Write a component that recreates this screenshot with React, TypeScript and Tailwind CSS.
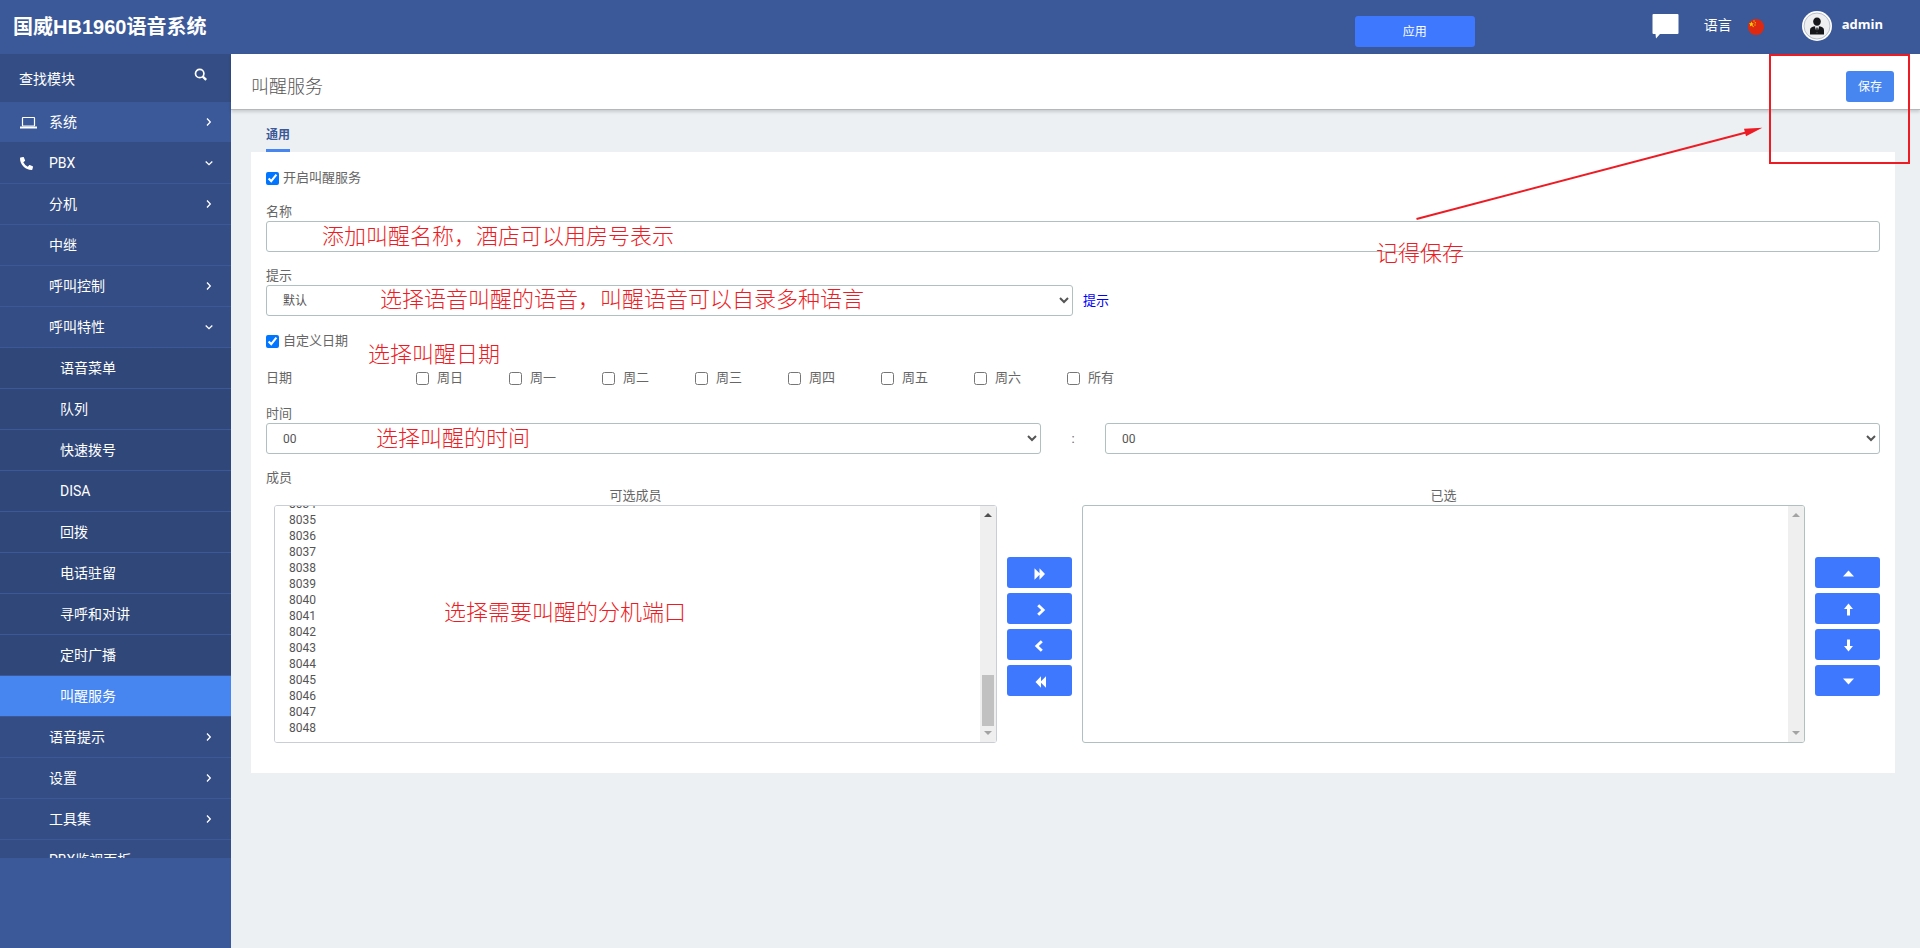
import { useEffect, useRef } from 'react';
import type { ReactNode } from 'react';
import { FaPhoneAlt } from 'react-icons/fa';

type MenuItem = {
  label: string;
  level: 1 | 2 | 3;
  icon?: ReactNode;
  arrow?: 'right' | 'down';
  state?: 'hover' | 'active';
};

const LaptopIcon = () => (
  <svg width="17" height="13" viewBox="0 0 17 13" fill="none" aria-hidden="true">
    <rect x="2.5" y="1.5" width="12" height="8.5" rx="0.5" stroke="white" strokeWidth="1.2" />
    <rect x="0" y="10.5" width="17" height="2" fill="white" />
  </svg>
);

const menu: MenuItem[] = [
  { label: '系统', level: 1, icon: <LaptopIcon />, arrow: 'right', state: 'hover' },
  { label: 'PBX', level: 1, icon: <FaPhoneAlt size={13} />, arrow: 'down' },
  { label: '分机', level: 2, arrow: 'right' },
  { label: '中继', level: 2 },
  { label: '呼叫控制', level: 2, arrow: 'right' },
  { label: '呼叫特性', level: 2, arrow: 'down' },
  { label: '语音菜单', level: 3 },
  { label: '队列', level: 3 },
  { label: '快速拨号', level: 3 },
  { label: 'DISA', level: 3 },
  { label: '回拨', level: 3 },
  { label: '电话驻留', level: 3 },
  { label: '寻呼和对讲', level: 3 },
  { label: '定时广播', level: 3 },
  { label: '叫醒服务', level: 3, state: 'active' },
  { label: '语音提示', level: 2, arrow: 'right' },
  { label: '设置', level: 2, arrow: 'right' },
  { label: '工具集', level: 2, arrow: 'right' },
  { label: 'PBX监视面板', level: 2 },
];

const days = ['周日', '周一', '周二', '周三', '周四', '周五', '周六', '所有'];
const extensions = Array.from({ length: 58 }, (_, i) => String(7991 + i));
const twoDigits = (count: number) => Array.from({ length: count }, (_, i) => String(i).padStart(2, '0'));

const rowColor = (item: MenuItem) => {
  if (item.state === 'active') return 'bg-[#4786f1] border-[#3b5998]';
  if (item.state === 'hover') return 'bg-[#3b5998] border-[#344d84]';
  return item.level === 3 ? 'bg-[#30477a] border-[#3b5998]' : 'bg-[#344d84] border-[#3b5998]';
};

const Arrow = ({ direction }: { direction: 'right' | 'down' }) => (
  <svg width="8" height="10" viewBox="0 0 8 10" fill="none" stroke="white" strokeWidth="1.300" aria-hidden="true">
    <path d={direction === 'right' ? 'M2 1.500L5.300 5 2 8.500' : 'M0.700 3.500L4 6.700l3.300-3.200'} />
  </svg>
);

const Header = () => (
  <header className="flex h-[54px] shrink-0 items-start bg-[#3b5998] text-white">
    <h1 className="flex-1 pt-3 pl-[13px] text-xl leading-[30px] font-bold">国威HB1960语音系统</h1>
    <button type="button" className="mt-4 mr-[177px] h-[31px] w-[120px] rounded-[3px] bg-[#3d78ff] text-xs">
      应用
    </button>
    <button type="button" aria-label="消息" className="mt-[13px] mr-[25px]">
      <svg width="27" height="26" viewBox="0 0 27 26" fill="white">
        <path d="M1.500 1h24a1 1 0 0 1 1 1v18a1 1 0 0 1-1 1H8l-4 4.500L3.500 21h-2a1 1 0 0 1-1-1V2a1 1 0 0 1 1-1z" />
      </svg>
    </button>
    <button type="button" className="mt-[15px] mr-[38px] flex items-center gap-4 text-sm leading-5">
      语言
      <svg width="16" height="16" viewBox="0 0 16 16" className="mt-1">
        <circle cx="8" cy="8" r="8" fill="#de2910" />
        <path d="M3.400 2.600l.7 1.700 1.800.1-1.400 1.200.5 1.800-1.600-1-1.600 1 .5-1.800L.9 4.400l1.800-.1z" fill="#ffd400" />
        <circle cx="6" cy="2" r=".7" fill="#f5b800" />
        <circle cx="7.300" cy="3.800" r=".7" fill="#f5b800" />
        <circle cx="7" cy="6" r=".7" fill="#f5b800" />
        <circle cx="5.200" cy="7.600" r=".7" fill="#f5b800" />
      </svg>
    </button>
    <button type="button" className="mt-[11px] mr-[37px] flex items-start gap-[10px]">
      <svg width="30" height="30" viewBox="0 0 30 30">
        <circle cx="15" cy="15" r="15" fill="white" />
        <circle cx="15" cy="15" r="13" fill="#eeeff1" stroke="#b9bfca" strokeWidth="1" />
        <path d="M15 6.500c2.400 0 3.800 1.700 3.800 4s-1.500 4.300-3.800 4.300-3.800-2-3.800-4.300 1.400-4 3.800-4z" fill="#15171b" />
        <path d="M8 23.500v-4.500c0-2.200 2-3.300 4.600-3.800L15 17l2.400-1.800c2.600.5 4.600 1.600 4.600 3.800v4.500z" fill="#15171b" />
        <path d="M12.800 15.300L15 16.800l2.200-1.500L15 22.500z" fill="#eeeff1" />
        <path d="M14.400 16.800h1.200l.5 4-1.100 1.500-1.100-1.500z" fill="#15171b" />
      </svg>
      <span className="pt-1 font-['Open_Sans',sans-serif] text-[13px] leading-[18px] font-bold">admin</span>
    </button>
  </header>
);

const Sidebar = () => (
  <aside className="flex w-[231px] shrink-0 flex-col bg-[#3b5998] pb-[90px] text-sm text-white">
    <div className="flex h-12 shrink-0 items-start bg-[#344d84] pl-[19px]">
      <input
        type="text"
        aria-label="查找模块"
        placeholder="查找模块"
        className="mt-[15px] h-5 w-[175px] bg-transparent leading-5 text-white outline-none placeholder:text-white"
      />
      <button type="button" aria-label="搜索" className="mt-[14px]">
        <svg width="14" height="14" viewBox="0 0 14 14" fill="none" stroke="white">
          <circle cx="5.700" cy="5.500" r="4.200" strokeWidth="1.700" />
          <path d="M8.800 8.600l3.400 3.200" strokeWidth="2.400" />
        </svg>
      </button>
    </div>
    <nav className="min-h-0 flex-1 overflow-hidden">
      {menu.map((item) => (
        <a
          key={item.label}
          href="#"
          className={`flex h-[41px] items-center border-b pr-[18px] ${item.level === 3 ? 'pl-[60px]' : 'pl-5'} ${rowColor(item)}`}
        >
          {item.level !== 3 && <span className="w-[29px]">{item.icon}</span>}
          <span className="flex-1">{item.label}</span>
          {item.arrow && <Arrow direction={item.arrow} />}
        </a>
      ))}
    </nav>
  </aside>
);

const Note = ({ className, children }: { className: string; children: ReactNode }) => (
  <span
    className={`pointer-events-none absolute text-[22px] leading-[30px] font-light whitespace-nowrap text-[#ed1c24] ${className}`}
  >
    {children}
  </span>
);

const IconButton = ({ label, children }: { label: string; children: ReactNode }) => (
  <button
    type="button"
    aria-label={label}
    className="flex h-[31px] w-[65px] items-center justify-center rounded-[3px] bg-[#3d78ff] pt-[3px]"
  >
    <svg width="14" height="14" viewBox="0 0 14 14" fill="white">
      {children}
    </svg>
  </button>
);

// track drawn over the right edge of a list box
const ScrollTrack = ({ scrolled = false }: { scrolled?: boolean }) => (
  <div
    aria-hidden="true"
    className="pointer-events-none absolute inset-y-px right-px flex w-4 flex-col items-center justify-between rounded-r-[2px] bg-[#efefef] py-[7px]"
  >
    <svg width="8" height="4" viewBox="0 0 8 4" fill={scrolled ? '#505050' : '#a3a3a3'}>
      <path d="M0 4l4-4 4 4z" />
    </svg>
    {scrolled && <div className="mt-auto mb-[5px] h-[51px] w-3 bg-[#c1c1c1]" />}
    <svg width="8" height="4" viewBox="0 0 8 4" fill="#a3a3a3">
      <path d="M0 0h8L4 4z" />
    </svg>
  </div>
);

const selectClass =
  'h-[31px] rounded-[3px] border border-[#b0bfbf] bg-white pl-3 text-xs text-[#555] outline-none';
const listClass =
  'block h-[238px] w-full overflow-y-scroll rounded-[3px] border bg-white py-[5px] pl-3 text-xs text-[#555] outline-none';

const Members = () => {
  const available = useRef<HTMLSelectElement>(null);

  useEffect(() => {
    if (available.current) available.current.scrollTop = available.current.scrollHeight;
  }, []);

  return (
    <div className="flex gap-[10px] pl-2">
      <div className="relative flex-1">
        <label htmlFor="available" className="block text-center leading-[18px]">
          可选成员
        </label>
        <div className="relative">
          <select id="available" multiple ref={available} className={`${listClass} border-[#c8ced8]`}>
            {extensions.map((ext) => (
              <option key={ext} className="h-4 p-0 pl-[2px] leading-4">
                {ext}
              </option>
            ))}
          </select>
          <ScrollTrack scrolled />
        </div>
        <Note className="top-[111px] left-[170px]">选择需要叫醒的分机端口</Note>
      </div>
      <div className="flex flex-col gap-[5px] pt-[70px]">
        <IconButton label="全部添加">
          <path d="M1.500 1.200l5 5V1.200L12 7l-5.500 5.800v-5l-5 5z" />
        </IconButton>
        <IconButton label="添加">
          <path d="M6.200 1.200l-2 2L8.200 7l-4 3.800 2 2L12.200 7z" />
        </IconButton>
        <IconButton label="移除">
          <path d="M7.800 1.200l2 2L5.800 7l4 3.800-2 2L1.800 7z" />
        </IconButton>
        <IconButton label="全部移除">
          <path d="M13 1.200l-5 5V1.200L2.500 7 8 12.800v-5l5 5z" />
        </IconButton>
      </div>
      <div className="flex-1">
        <label htmlFor="selected" className="block text-center leading-[18px]">
          已选
        </label>
        <div className="relative">
          <select id="selected" multiple className={`${listClass} border-[#b0bfbf]`} />
          <ScrollTrack />
        </div>
      </div>
      <div className="flex flex-col gap-[5px] pt-[70px]">
        <IconButton label="置顶">
          <path d="M2 9.500L7.500 3.500 13 9.500z" />
        </IconButton>
        <IconButton label="上移">
          <path d="M7.500 0.500L12 6H9v6.500H6V6H3z" />
        </IconButton>
        <IconButton label="下移">
          <path d="M7.500 12.500L12 7H9V0.500H6V7H3z" />
        </IconButton>
        <IconButton label="置底">
          <path d="M2 3.500h11L7.500 9.500z" />
        </IconButton>
      </div>
    </div>
  );
};

const WakeUpForm = () => (
  <form className="flex flex-col gap-[15px] bg-white px-[15px] pt-4 pb-[30px] text-[13px] leading-[18px] text-[#666]">
    <label className="flex h-5 items-center gap-1 self-start">
      <input type="checkbox" defaultChecked className="size-[13px]" />
      开启叫醒服务
    </label>

    <div className="relative flex flex-col">
      <label htmlFor="name">名称</label>
      <input id="name" type="text" className="h-[31px] rounded-[3px] border border-[#b0bfbf] px-3 text-xs outline-none" />
      <Note className="top-[19px] left-14">添加叫醒名称，酒店可以用房号表示</Note>
    </div>

    <div className="relative">
      <label htmlFor="prompt" className="block">
        提示
      </label>
      <div className="flex items-center gap-[10px]">
        <select id="prompt" className={`w-1/2 ${selectClass}`}>
          <option>默认</option>
        </select>
        <a href="#" className="text-[#0000ff]">
          提示
        </a>
      </div>
      <Note className="top-[18px] left-[114px]">选择语音叫醒的语音，叫醒语音可以自录多种语言</Note>
    </div>

    <div className="relative flex h-5 items-center">
      <label className="flex items-center gap-1">
        <input type="checkbox" defaultChecked className="size-[13px]" />
        自定义日期
      </label>
      <Note className="top-[9px] left-[102px]">选择叫醒日期</Note>
    </div>

    <div className="flex h-6 items-center">
      <span className="w-[150px]">日期</span>
      {days.map((day) => (
        <label key={day} className="flex w-[93px] items-center gap-2">
          <input type="checkbox" className="size-[13px]" />
          {day}
        </label>
      ))}
    </div>

    <div className="relative">
      <label htmlFor="hour" className="block">
        时间
      </label>
      <div className="flex items-center">
        <select id="hour" className={`flex-1 ${selectClass}`}>
          {twoDigits(24).map((h) => (
            <option key={h}>{h}</option>
          ))}
        </select>
        <span className="w-16 text-center">:</span>
        <select id="minute" aria-label="分钟" className={`flex-1 ${selectClass}`}>
          {twoDigits(60).map((m) => (
            <option key={m}>{m}</option>
          ))}
        </select>
      </div>
      <Note className="top-[19px] left-[110px]">选择叫醒的时间</Note>
    </div>

    <div>
      <span className="block">成员</span>
      <Members />
    </div>
  </form>
);

const App = () => {
  return (
    <div className="relative flex h-screen flex-col overflow-hidden bg-[#ecf0f3] font-['Roboto','Liberation_Sans','Noto_Sans_CJK_SC',sans-serif] [&_h1]:font-['Liberation_Sans','Noto_Sans_CJK_SC',sans-serif]">
      <Header />
      <div className="flex min-h-0 flex-1">
        <Sidebar />
        <main className="flex-1">
          <div className="flex h-14 items-center justify-between border-b border-[#b4b8bb] bg-white pr-[26px] pl-5 shadow-[0_2px_3px_rgba(0,0,0,0.15)]">
            <h2 className="pt-[10px] text-lg font-light text-[#555]">叫醒服务</h2>
            <button type="button" className="mt-[10px] h-[31px] w-12 rounded-[3px] bg-[#4786f1] text-xs text-white">
              保存
            </button>
          </div>
          <div className="pt-[14px] pr-[25px] pl-5">
            <div className="flex px-[15px]">
              <a
                href="#"
                className="h-7 border-b-[3px] border-[#4786f1] text-xs leading-[22px] font-bold text-[#3b5998]"
              >
                通用
              </a>
            </div>
            <WakeUpForm />
          </div>
        </main>
      </div>

      <div className="pointer-events-none absolute top-[54px] right-[10px] h-[110px] w-[141px] border-2 border-[#ed1c24]" />
      <svg
        className="pointer-events-none absolute top-[124px] right-[156px]"
        width="350"
        height="98"
        viewBox="0 0 350 98"
        fill="#ed1c24"
      >
        <path d="M2.500 95L332 8.500" stroke="#ed1c24" strokeWidth="2" />
        <path d="M348.300 3.700L330 4.700l2 7.600z" />
      </svg>
      <Note className="top-[239px] right-[456px]">记得保存</Note>
    </div>
  );
};

export default App;
